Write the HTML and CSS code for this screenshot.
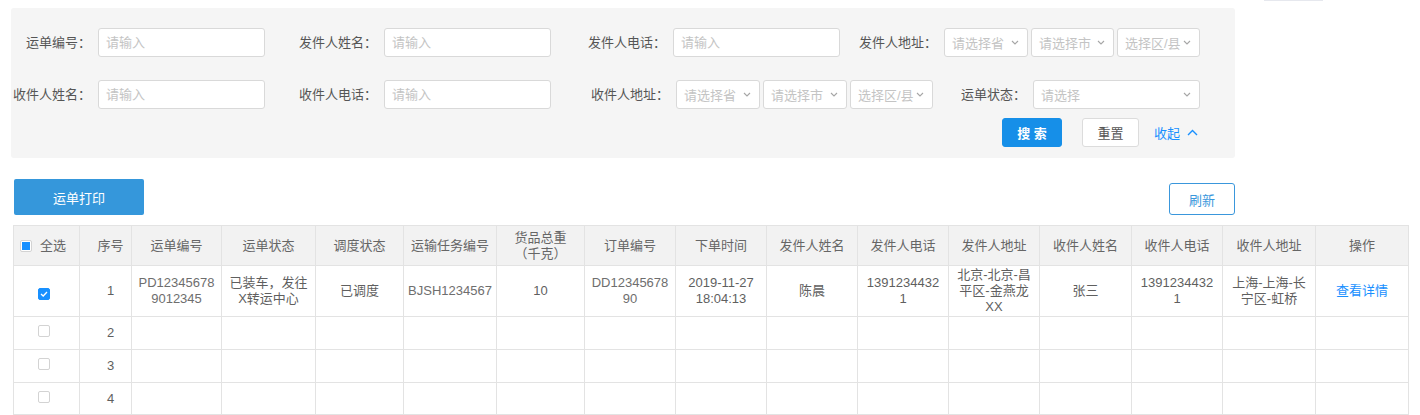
FILE: index.html
```html
<!DOCTYPE html>
<html lang="zh-CN">
<head>
<meta charset="utf-8">
<title>运单管理</title>
<link rel="stylesheet" href="styles.css">
</head>
<body>
<div class="edge-bar"></div>
<div class="page">
  <form class="filter">
    <div class="filter-row">
      <div class="field"><label class="lbl lbl-a">运单编号：</label><input class="inp" placeholder="请输入"></div>
      <div class="field"><label class="lbl lbl-b">发件人姓名：</label><input class="inp" placeholder="请输入"></div>
      <div class="field"><label class="lbl lbl-c">发件人电话：</label><input class="inp" placeholder="请输入"></div>
      <div class="field"><label class="lbl lbl-d">发件人地址：</label>
        <div class="sel-group">
          <div class="sel sel-84"><span>请选择省</span><svg class="caret" width="8" height="5" viewBox="0 0 8 5"><polyline points="1,1 4,4 7,1" fill="none" stroke="#a6a6a6" stroke-width="1.1"/></svg></div>
          <div class="sel sel-83"><span>请选择市</span><svg class="caret" width="8" height="5" viewBox="0 0 8 5"><polyline points="1,1 4,4 7,1" fill="none" stroke="#a6a6a6" stroke-width="1.1"/></svg></div>
          <div class="sel sel-83"><span>选择区/县</span><svg class="caret" width="8" height="5" viewBox="0 0 8 5"><polyline points="1,1 4,4 7,1" fill="none" stroke="#a6a6a6" stroke-width="1.1"/></svg></div>
        </div>
      </div>
    </div>
    <div class="filter-row row-2">
      <div class="field"><label class="lbl lbl-a">收件人姓名：</label><input class="inp" placeholder="请输入"></div>
      <div class="field"><label class="lbl lbl-b">收件人电话：</label><input class="inp" placeholder="请输入"></div>
      <div class="field"><label class="lbl lbl-e">收件人地址：</label>
        <div class="sel-group">
          <div class="sel sel-84"><span>请选择省</span><svg class="caret" width="8" height="5" viewBox="0 0 8 5"><polyline points="1,1 4,4 7,1" fill="none" stroke="#a6a6a6" stroke-width="1.1"/></svg></div>
          <div class="sel sel-84"><span>请选择市</span><svg class="caret" width="8" height="5" viewBox="0 0 8 5"><polyline points="1,1 4,4 7,1" fill="none" stroke="#a6a6a6" stroke-width="1.1"/></svg></div>
          <div class="sel sel-83"><span>选择区/县</span><svg class="caret" width="8" height="5" viewBox="0 0 8 5"><polyline points="1,1 4,4 7,1" fill="none" stroke="#a6a6a6" stroke-width="1.1"/></svg></div>
        </div>
      </div>
      <div class="field"><label class="lbl lbl-f">运单状态：</label>
        <div class="sel sel-167"><span>请选择</span><svg class="caret" width="8" height="5" viewBox="0 0 8 5"><polyline points="1,1 4,4 7,1" fill="none" stroke="#a6a6a6" stroke-width="1.1"/></svg></div>
      </div>
    </div>
    <div class="filter-actions">
      <button type="button" class="btn btn-primary">搜 索</button>
      <button type="button" class="btn btn-default">重置</button>
      <a class="collapse-link">收起<svg width="11" height="7" viewBox="0 0 11 7"><polyline points="1,6 5.5,1.5 10,6" fill="none" stroke="#1890ff" stroke-width="1.4"/></svg></a>
    </div>
  </form>

  <div class="toolbar">
    <button type="button" class="btn-print">运单打印</button>
    <button type="button" class="btn-refresh">刷新</button>
  </div>

  <table class="grid">
    <colgroup>
      <col style="width:66px"><col style="width:52px"><col style="width:90px"><col style="width:94px">
      <col style="width:88px"><col style="width:93px"><col style="width:88px"><col style="width:91px">
      <col style="width:91px"><col style="width:91px"><col style="width:91px"><col style="width:91px">
      <col style="width:92px"><col style="width:91px"><col style="width:93px"><col style="width:93px">
    </colgroup>
    <thead>
      <tr>
        <th class="c-check"><span class="cb cb-partial"></span><span class="all-text">全选</span></th>
        <th class="c-no">序号</th>
        <th>运单编号</th>
        <th>运单状态</th>
        <th>调度状态</th>
        <th>运输任务编号</th>
        <th>货品总重<br>（千克）</th>
        <th>订单编号</th>
        <th>下单时间</th>
        <th>发件人姓名</th>
        <th>发件人电话</th>
        <th>发件人地址</th>
        <th>收件人姓名</th>
        <th>收件人电话</th>
        <th>收件人地址</th>
        <th>操作</th>
      </tr>
    </thead>
    <tbody>
      <tr class="row-main">
        <td class="c-check"><span class="cb cb-on"><svg width="8" height="6" viewBox="0 0 8 6"><polyline points="1,3 3.2,5 7,1" fill="none" stroke="#fff" stroke-width="1.3"/></svg></span></td>
        <td class="c-no">1</td>
        <td class="light">PD12345678<br>9012345</td>
        <td>已装车，发往<br>X转运中心</td>
        <td>已调度</td>
        <td class="light">BJSH1234567</td>
        <td>10</td>
        <td class="light">DD12345678<br>90</td>
        <td>2019-11-27<br>18:04:13</td>
        <td>陈晨</td>
        <td>1391234432<br>1</td>
        <td>北京-北京-昌<br>平区-金燕龙<br>XX</td>
        <td>张三</td>
        <td>1391234432<br>1</td>
        <td>上海-上海-长<br>宁区-虹桥</td>
        <td><a class="detail-link">查看详情</a></td>
      </tr>
      <tr class="row-empty">
        <td class="c-check c-top"><span class="cb"></span></td>
        <td class="c-no">2</td>
        <td></td><td></td><td></td><td></td><td></td><td></td><td></td><td></td><td></td><td></td><td></td><td></td><td></td><td></td>
      </tr>
      <tr class="row-empty">
        <td class="c-check c-top"><span class="cb"></span></td>
        <td class="c-no">3</td>
        <td></td><td></td><td></td><td></td><td></td><td></td><td></td><td></td><td></td><td></td><td></td><td></td><td></td><td></td>
      </tr>
      <tr class="row-empty row-last">
        <td class="c-check c-top"><span class="cb"></span></td>
        <td class="c-no">4</td>
        <td></td><td></td><td></td><td></td><td></td><td></td><td></td><td></td><td></td><td></td><td></td><td></td><td></td><td></td>
      </tr>
    </tbody>
  </table>
</div>
</body>
</html>
```

FILE: styles.css
```css
* { box-sizing: border-box; }

html, body {
  margin: 0;
  padding: 0;
  background: #ffffff;
  font-family: "Liberation Sans", "Noto Sans CJK SC", sans-serif;
  font-size: 13px;
  color: #555;
  overflow: hidden;
}

.edge-bar {
  position: absolute;
  top: 0;
  left: 1264px;
  width: 59px;
  height: 1px;
  background: #e6e8ee;
}

.page {
  padding-top: 8px;
}

/* ---------- filter panel ---------- */
.filter {
  margin: 0 0 0 11px;
  width: 1224px;
  background: #f5f5f5;
  border-radius: 3px;
  padding: 20px 0 11px 0;
}

.filter-row {
  display: flex;
  align-items: center;
  height: 29px;
}

.row-2 {
  margin-top: 23px;
}

.field {
  display: flex;
  align-items: center;
}

.lbl {
  display: block;
  text-align: right;
  padding-right: 7px;
  color: #555;
  white-space: nowrap;
  line-height: 29px;
}

.lbl-a { width: 87px; }
.lbl-b { width: 119px; }
.lbl-c { width: 122px; }
.lbl-d { width: 104px; }
.lbl-e { width: 125px; }
.lbl-f { width: 100px; }

.inp {
  width: 167px;
  height: 29px;
  border: 1px solid #d9d9d9;
  border-radius: 3px;
  background: #fff;
  padding: 0 7px;
  font: inherit;
  color: #555;
  outline: none;
}

.inp::placeholder {
  color: #c4c4c4;
}

.sel-group {
  display: flex;
  gap: 3px;
}

.sel {
  height: 29px;
  border: 1px solid #d9d9d9;
  border-radius: 3px;
  background: #fff;
  display: flex;
  align-items: center;
  justify-content: space-between;
  padding: 0 8px 0 7px;
  color: #c4c4c4;
  white-space: nowrap;
}

.sel-84 { width: 84px; }
.sel-83 { width: 83px; }
.sel-167 { width: 167px; }

.caret {
  flex: none;
  margin-left: 2px;
}

.filter-actions {
  display: flex;
  align-items: center;
  justify-content: flex-end;
  margin-top: 9px;
  padding-right: 37px;
  height: 29px;
}

.btn {
  height: 29px;
  border-radius: 3px;
  font: inherit;
  cursor: pointer;
}

.btn-primary {
  width: 60px;
  background: #168fe8;
  border: 1px solid #168fe8;
  color: #fff;
  font-weight: 700;
}

.btn-default {
  width: 57px;
  margin-left: 20px;
  background: #fff;
  border: 1px solid #dcdcdc;
  color: #555;
}

.collapse-link {
  display: flex;
  align-items: center;
  gap: 7px;
  margin-left: 15px;
  color: #1890ff;
  cursor: pointer;
}

/* ---------- toolbar ---------- */
.toolbar {
  display: flex;
  align-items: flex-end;
  justify-content: space-between;
  width: 1235px;
  padding-left: 14px;
  margin-top: 21px;
  margin-bottom: 10px;
}

.btn-print {
  width: 130px;
  height: 36px;
  background: #3597db;
  border: none;
  border-radius: 2px;
  color: #fff;
  font: inherit;
}

.btn-refresh {
  width: 66px;
  height: 32px;
  background: #fff;
  border: 1px solid #3a97dc;
  border-radius: 3px;
  color: #3a97dc;
  font: inherit;
}

/* ---------- table ---------- */
.grid {
  margin-left: 13px;
  width: 1396px;
  table-layout: fixed;
  border-collapse: collapse;
  line-height: 16px;
}

.grid th,
.grid td {
  border: 1px solid #e3e3e3;
  text-align: center;
  vertical-align: middle;
  padding: 0 2px;
  white-space: nowrap;
}

.grid th {
  background: #f2f2f2;
  font-weight: 400;
  color: #666;
  height: 40px;
}

.grid td {
  color: #5f5f5f;
}

.grid td.light {
  color: #6e6e6e;
}

.row-main td {
  height: 51px;
}

.row-empty td {
  height: 33px;
}

.row-last td {
  height: 32px;
}

.grid .c-no {
  padding-left: 12px;
}

.grid th.c-check {
  text-align: left;
  padding-left: 6px;
}

.all-text {
  vertical-align: middle;
  margin-left: 8px;
}

.grid td.c-check {
  padding: 4px 6px 0 0;
}

.grid td.c-top {
  vertical-align: top;
  padding-top: 5px;
}

.cb {
  display: inline-flex;
  align-items: center;
  justify-content: center;
  width: 12px;
  height: 12px;
  border: 1px solid #d3d3d3;
  border-radius: 2px;
  background: #fff;
  vertical-align: middle;
}

.cb-partial::after {
  content: "";
  width: 8px;
  height: 8px;
  background: #1890ff;
}

.cb-on {
  background: #1890ff;
  border-color: #1890ff;
}

.detail-link {
  color: #1890ff;
  cursor: pointer;
}
```
